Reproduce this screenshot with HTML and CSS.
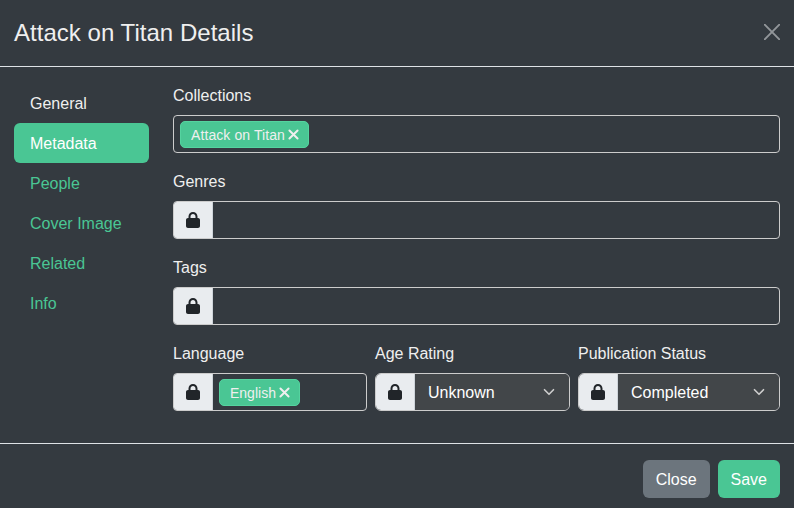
FILE: index.html
```html
<!DOCTYPE html>
<html lang="en">
<head>
<meta charset="utf-8">
<title>Attack on Titan Details</title>
<link rel="stylesheet" href="styles.css">
</head>
<body>
<svg class="defs" aria-hidden="true">
  <symbol id="lock" viewBox="0 0 448 512"><path d="M144 144v48h160v-48c0-44-36-80-80-80s-80 36-80 80zm-64 48v-48C80 64 144 0 224 0s144 64 144 144v48h16c35 0 64 29 64 64v192c0 35-29 64-64 64H64c-35 0-64-29-64-64V256c0-35 29-64 64-64z"/></symbol>
  <symbol id="times" viewBox="0 0 10 10"><path d="M1.3 1.3l7.4 7.4M8.7 1.3L1.3 8.7" fill="none" stroke="currentColor" stroke-width="1.8" stroke-linecap="round"/></symbol>
  <symbol id="chevron" viewBox="0 0 16 16"><path d="m2 5 6 6 6-6" fill="none" stroke="currentColor" stroke-width="2.2" stroke-linecap="round" stroke-linejoin="round"/></symbol>
</svg>
<div class="modal">
  <header class="modal-header">
    <h4 class="title">Attack on Titan Details</h4>
    <button class="btn-close" aria-label="Close"><svg viewBox="0 0 16 16"><path d="M.7.7l14.6 14.6M15.3.7L.7 15.3" fill="none" stroke="currentColor" stroke-width="1.9" stroke-linecap="round"/></svg></button>
  </header>
  <main class="modal-body">
    <nav class="tabs">
      <a class="tab visited">General</a>
      <a class="tab active">Metadata</a>
      <a class="tab">People</a>
      <a class="tab">Cover Image</a>
      <a class="tab">Related</a>
      <a class="tab">Info</a>
    </nav>
    <form class="fields">
      <div class="field">
        <label>Collections</label>
        <div class="control"><div class="typeahead"><span class="tag">Attack on Titan<svg><use href="#times"/></svg></span></div></div>
      </div>
      <div class="field">
        <label>Genres</label>
        <div class="control"><span class="addon"><svg><use href="#lock"/></svg></span><div class="typeahead"></div></div>
      </div>
      <div class="field">
        <label>Tags</label>
        <div class="control"><span class="addon"><svg><use href="#lock"/></svg></span><div class="typeahead"></div></div>
      </div>
      <div class="row">
        <div class="field">
          <label>Language</label>
          <div class="control"><span class="addon"><svg><use href="#lock"/></svg></span><div class="typeahead"><span class="tag compact">English<svg><use href="#times"/></svg></span></div></div>
        </div>
        <div class="field">
          <label>Age Rating</label>
          <div class="control rounded"><span class="addon"><svg><use href="#lock"/></svg></span><div class="select">Unknown<svg><use href="#chevron"/></svg></div></div>
        </div>
        <div class="field">
          <label>Publication Status</label>
          <div class="control rounded"><span class="addon"><svg><use href="#lock"/></svg></span><div class="select">Completed<svg><use href="#chevron"/></svg></div></div>
        </div>
      </div>
    </form>
  </main>
  <footer class="modal-footer">
    <button class="btn secondary">Close</button>
    <button class="btn primary">Save</button>
  </footer>
</div>
</body>
</html>
```
FILE: styles.css
```css
* { box-sizing: border-box; }
body {
  margin: 0;
  height: 508px;
  overflow: hidden;
  background: #343a40;
  color: #efefef;
  font: 16px/24px "Liberation Sans", Arial, sans-serif;
}
.defs { display: none; }
.modal { display: flex; flex-direction: column; height: 504px; }
.modal-header {
  display: flex;
  justify-content: space-between;
  align-items: center;
  height: 67px;
  padding: 0 14px;
  border-bottom: 1px solid #dee2e6;
}
.title {
  margin: 0;
  padding-bottom: 2px;
  font-size: 24px;
  font-weight: 400;
  line-height: 29px;
  letter-spacing: 0.03px;
}
.btn-close {
  display: flex;
  width: 16px;
  height: 16px;
  margin-top: -2px;
  padding: 0;
  border: 0;
  background: none;
  color: #92969a;
}
.btn-close svg { width: 16px; height: 16px; }
.modal-body { display: flex; gap: 24px; height: 376px; padding: 16px 14px; }
.tabs { width: 135px; }
.tab {
  display: block;
  height: 40px;
  padding: 9px 16px 7px;
  border-radius: 6px;
  color: #4ac694;
}
.tab.visited { color: #efefef; }
.tab.active { background: #4ac694; color: #fff; }
.fields { flex: 1; }
.field { margin-bottom: 16px; }
.field label { display: block; height: 25px; padding-top: 1px; margin-bottom: 7px; }
.row { display: grid; grid-template-columns: 194px 195px 1fr; column-gap: 8px; }
.control {
  display: flex;
  height: 38px;
  border: 1px solid #ccc;
  border-radius: 4px;
  overflow: hidden;
}
.control.rounded { border-radius: 6px; }
.addon {
  display: flex;
  align-items: center;
  justify-content: center;
  width: 39px;
  border-right: 1px solid #ced4da;
  background: #e9ecef;
  color: #212529;
}
.addon svg { width: 14px; height: 16px; fill: currentColor; }
.typeahead { display: flex; flex: 1; align-items: center; padding: 0 6px; }
.tag {
  display: flex;
  align-items: center;
  gap: 3px;
  height: 27px;
  padding: 1px 9px 0 10px;
  border: 1px solid #55d39f;
  border-radius: 5px;
  background: #4ac694;
  font-size: 14px;
  letter-spacing: 0.09px;
}
.tag.compact { letter-spacing: 0; }
.tag svg { width: 11px; height: 11px; }
.select {
  display: flex;
  flex: 1;
  align-items: center;
  justify-content: space-between;
  padding: 1px 14px 0 13px;
  background: #424649;
  color: #fff;
}
.select svg { width: 12px; height: 12px; margin-bottom: 2px; color: #ccc; }
.modal-footer {
  display: flex;
  justify-content: flex-end;
  gap: 8px;
  height: 61px;
  padding: 16px 14px 0;
  border-top: 1px solid #dee2e6;
}
.btn {
  height: 38px;
  padding: 2px 13px 0;
  border: 0;
  border-radius: 6px;
  color: #fff;
  font: inherit;
}
.btn.secondary { background: #6c757d; }
.btn.primary { background: #4ac694; }
```
